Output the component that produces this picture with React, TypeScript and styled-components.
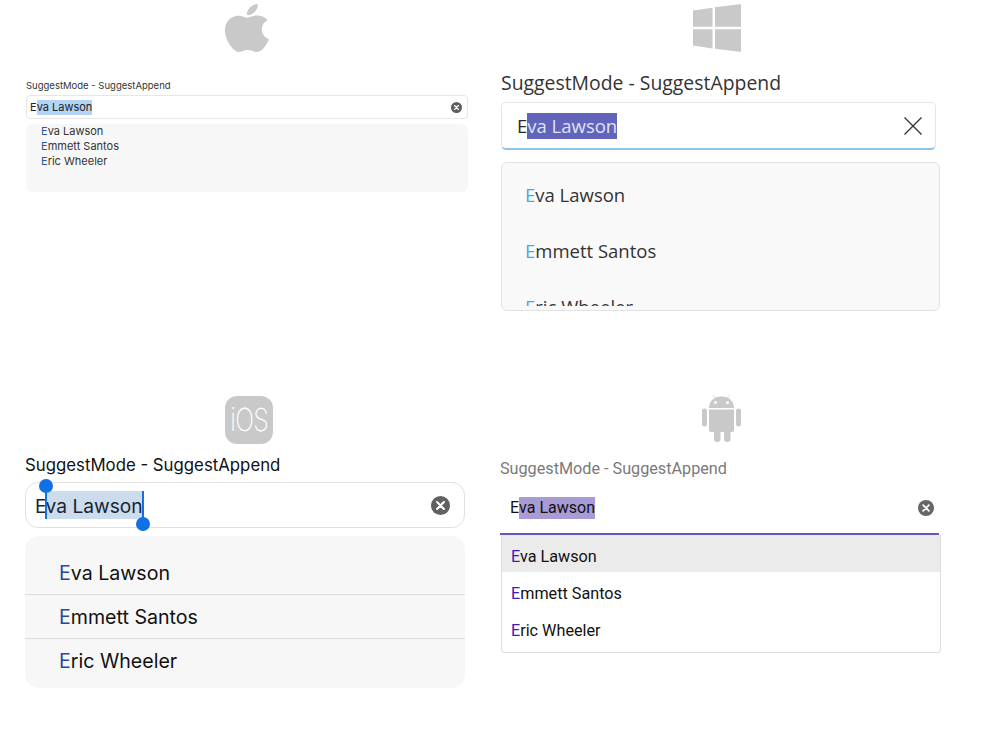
import React from 'react';
import styled, { createGlobalStyle } from 'styled-components';
import { SiApple } from 'react-icons/si';

const names = ['Eva Lawson', 'Emmett Santos', 'Eric Wheeler'];
const labelText = 'SuggestMode - SuggestAppend';

const GlobalStyle = createGlobalStyle`
  html, body {
    margin: 0;
    padding: 0;
    background: #fff;
  }
  * { box-sizing: border-box; }
`;

const Page = styled.div`
  width: 1000px;
  height: 750px;
  padding-left: 25px;
  display: grid;
  grid-template-columns: 475px 475px;
  grid-template-rows: 395px 355px;
  overflow: hidden;
`;

const Panel = styled.section<{ $width: number; $inset?: number }>`
  width: ${({ $width }) => $width}px;
  margin-left: ${({ $inset }) => $inset || 0}px;
  display: flex;
  flex-direction: column;
`;

const IconSlot = styled.div<{ $left: number; $top: number; $height: number }>`
  height: ${({ $height }) => $height}px;
  padding: ${({ $top }) => $top}px 0 0 ${({ $left }) => $left}px;
  color: #c9c9c9;
  display: flex;
  align-items: flex-start;
`;

const Entry = styled.div`
  position: relative;
  display: flex;
  align-items: center;
  justify-content: space-between;
  background: #fff;
`;

/* MacCatalyst */
const AppleLogo = styled(SiApple)`
  width: 54px;
  height: 48px;
  flex: none;
`;
const MacLabel = styled.div`
  font: 9.5px/14px Inter, sans-serif;
  color: #333;
  height: 16px;
  margin-top: 27px;
`;
const MacEntry = styled(Entry)`
  height: 24px;
  padding: 0 5px 0 3px;
  border: 1px solid #e6e6e6;
  border-radius: 4px;
  font: 11px Inter, sans-serif;
  color: #222;
`;
const MacSelected = styled.span`
  display: inline-block;
  height: 15px;
  line-height: 15px;
  background: #b3d3f7;
`;
const MacList = styled.div`
  height: 68px;
  margin-top: 5px;
  background: #f7f7f7;
  border-radius: 6px;
`;
const MacItem = styled.div`
  height: 15px;
  padding-left: 15px;
  font: 11px/15px Inter, sans-serif;
  color: #333;
  b { font-weight: 400; color: #2f55a8; }
`;

/* Windows */
const WinLabel = styled.div`
  font: 19.4px/26px 'Open Sans', sans-serif;
  color: #333;
  height: 26px;
  margin-top: 18px;
`;
const WinEntry = styled(Entry)`
  height: 48px;
  width: 435px;
  margin-top: 6px;
  padding: 0 13px 0 15px;
  border: 1px solid #e5e5e5;
  border-bottom: 2px solid #8cc4ec;
  border-radius: 5px;
  font: 18.5px 'Open Sans', sans-serif;
  color: #2a2a2a;
`;
const WinSelected = styled.span`
  display: inline-block;
  height: 26px;
  line-height: 26px;
  background: #6264bb;
  color: #dfe3f5;
`;
const WinList = styled.div`
  height: 149px;
  margin-top: 12px;
  border: 1px solid #e2e2e2;
  border-radius: 6px;
  background: #f9f9f9;
  overflow: hidden;
`;
const WinClip = styled.div`
  height: 143px;
  padding-top: 4px;
  overflow: hidden;
`;
const WinItem = styled.div`
  height: 56px;
  padding-left: 23px;
  font: 18.5px/56px 'Open Sans', sans-serif;
  color: #333;
  b { font-weight: 400; color: #4ea4ea; }
`;

/* iOS */
const IosBadge = styled.div`
  width: 48px;
  height: 48px;
  border-radius: 12px;
  background: #c9c9c9;
  color: #fff;
  font: 200 32px/48px Inter, sans-serif;
  text-align: center;
  span {
    display: inline-block;
    transform: scaleX(0.78);
    letter-spacing: -1px;
  }
`;
const IosLabel = styled.div`
  font: 16.8px/22px Inter, sans-serif;
  color: #111;
  height: 22px;
  margin-top: 10px;
`;
const IosEntry = styled(Entry)`
  height: 46px;
  margin-top: 6px;
  padding: 0 14px 0 9px;
  border: 1px solid #e0e0e0;
  border-radius: 13px;
  font: 19.2px Inter, sans-serif;
  color: #1a2433;
`;
const IosSelected = styled.span`
  position: relative;
  display: inline-block;
  height: 28px;
  margin-left: -1px;
  padding-right: 1px;
  line-height: 30px;
  background: #cbdcec;
`;
const Handle = styled.i<{ $end?: boolean }>`
  position: absolute;
  top: 0;
  bottom: 0;
  width: 2px;
  background: #1170e3;
  ${({ $end }) => ($end ? 'right: 0;' : 'left: -1px;')}
  &::after {
    content: '';
    position: absolute;
    left: -6px;
    width: 14px;
    height: 14px;
    border-radius: 50%;
    background: #1170e3;
    ${({ $end }) => ($end ? 'bottom: -12px;' : 'top: -12px;')}
  }
`;
const IosList = styled.div`
  height: 152px;
  margin-top: 8px;
  padding-top: 15px;
  border-radius: 14px;
  background: #f7f7f7;
`;
const IosItem = styled.div<{ $last?: boolean }>`
  height: 44px;
  padding-left: 34px;
  font: 19.6px/44px Inter, sans-serif;
  color: #111;
  border-bottom: ${({ $last }) => ($last ? 'none' : '1px solid #dcdcdc')};
  b { font-weight: 400; color: #1f4aa0; }
`;

/* Android */
const DroidLabel = styled.div`
  font: 16.2px/20px Roboto, sans-serif;
  color: #7a7a7a;
  height: 20px;
  margin-top: 16px;
`;
const DroidEntry = styled(Entry)`
  height: 46px;
  width: 439px;
  margin-top: 10px;
  padding: 0 5px 6px 10px;
  border-bottom: 2px solid #6a55c0;
  font: 16px Roboto, sans-serif;
  color: #111;
`;
const DroidSelected = styled.span`
  display: inline-block;
  height: 22px;
  line-height: 22px;
  background: #a99bd6;
`;
const DroidList = styled.div`
  width: 440px;
  margin-left: 1px;
  padding-bottom: 6px;
  border: 1px solid #dddddd;
  border-top: none;
  border-radius: 0 0 4px 4px;
`;
const DroidItem = styled.div<{ $active?: boolean }>`
  height: 37px;
  padding-left: 9px;
  font: 16.2px/44px Roboto, sans-serif;
  color: #111;
  background: ${({ $active }) => ($active ? '#ebebeb' : '#fff')};
  b { font-weight: 400; color: #3f1cc0; }
`;

const Clear: React.FC<{ size: number; fill: string }> = ({ size, fill }) => (
  <svg width={size} height={size} viewBox="0 0 20 20">
    <circle cx="10" cy="10" r="10" fill={fill} />
    <path d="M6.4 6.4l7.2 7.2M13.6 6.4l-7.2 7.2" stroke="#fff" strokeWidth="2.2" strokeLinecap="round" />
  </svg>
);

const WindowsLogo = () => (
  <svg width="48" height="48" viewBox="0 0 48 48" fill="currentColor">
    <path d="M0 6.5L19.5 3.7V22.8H0zM22 3.3L48 0V22.8H22zM0 25.3H19.5V44.4L0 41.6zM22 25.3H48V48L22 44.8z" />
  </svg>
);

const AndroidLogo = () => (
  <svg width="39" height="47" viewBox="0 0 39 47" fill="currentColor">
    <path d="M7 13C7 6 12 1.5 19.5 1.5S32 6 32 13z" />
    <circle cx="13.5" cy="7.5" r="1.5" fill="#fff" />
    <circle cx="25.5" cy="7.5" r="1.5" fill="#fff" />
    <path d="M11 0l3 3.5M28 0l-3 3.5" stroke="currentColor" strokeWidth="0.7" />
    <path d="M7 14.5H32V35a2 2 0 0 1-2 2H9a2 2 0 0 1-2-2z" />
    <rect x="0" y="13.5" width="5" height="18" rx="2.5" />
    <rect x="34" y="13.5" width="5" height="18" rx="2.5" />
    <rect x="12" y="30" width="6.5" height="17" rx="3.2" />
    <rect x="22" y="30" width="6.5" height="17" rx="3.2" />
  </svg>
);

const Hit: React.FC<{ name: string }> = ({ name }) => (
  <>
    <b>{name[0]}</b>
    {name.slice(1)}
  </>
);

const App: React.FC = () => (
  <Page>
    <GlobalStyle />

    <Panel $width={442} $inset={1}>
      <IconSlot $left={194} $top={4} $height={52}>
        <AppleLogo preserveAspectRatio="none" />
      </IconSlot>
      <MacLabel>{labelText}</MacLabel>
      <MacEntry>
        <span>E<MacSelected>va Lawson</MacSelected></span>
        <Clear size={11} fill="#5f5f5f" />
      </MacEntry>
      <MacList>
        {names.map(n => <MacItem key={n}><Hit name={n} /></MacItem>)}
      </MacList>
    </Panel>

    <Panel $width={439} $inset={1}>
      <IconSlot $left={192} $top={4} $height={52}>
        <WindowsLogo />
      </IconSlot>
      <WinLabel>{labelText}</WinLabel>
      <WinEntry>
        <span>E<WinSelected>va Lawson</WinSelected></span>
        <svg width="18" height="18" viewBox="0 0 18 18">
          <path d="M0.5 0.5l17 17M17.5 0.5l-17 17" stroke="#333" strokeWidth="1.3" fill="none" />
        </svg>
      </WinEntry>
      <WinList>
        <WinClip>
          {names.map(n => <WinItem key={n}><Hit name={n} /></WinItem>)}
        </WinClip>
      </WinList>
    </Panel>

    <Panel $width={440}>
      <IconSlot $left={200} $top={1} $height={49}>
        <IosBadge><span>iOS</span></IosBadge>
      </IconSlot>
      <IosLabel>{labelText}</IosLabel>
      <IosEntry>
        <span>E<IosSelected><Handle />va Lawson<Handle $end /></IosSelected></span>
        <Clear size={19} fill="#616161" />
      </IosEntry>
      <IosList>
        {names.map((n, i) => <IosItem key={n} $last={i === names.length - 1}><Hit name={n} /></IosItem>)}
      </IosList>
    </Panel>

    <Panel $width={441}>
      <IconSlot $left={202} $top={0} $height={48}>
        <AndroidLogo />
      </IconSlot>
      <DroidLabel>{labelText}</DroidLabel>
      <DroidEntry>
        <span>E<DroidSelected>va Lawson</DroidSelected></span>
        <Clear size={16} fill="#666666" />
      </DroidEntry>
      <DroidList>
        {names.map((n, i) => <DroidItem key={n} $active={i === 0}><Hit name={n} /></DroidItem>)}
      </DroidList>
    </Panel>
  </Page>
);

export default App;
